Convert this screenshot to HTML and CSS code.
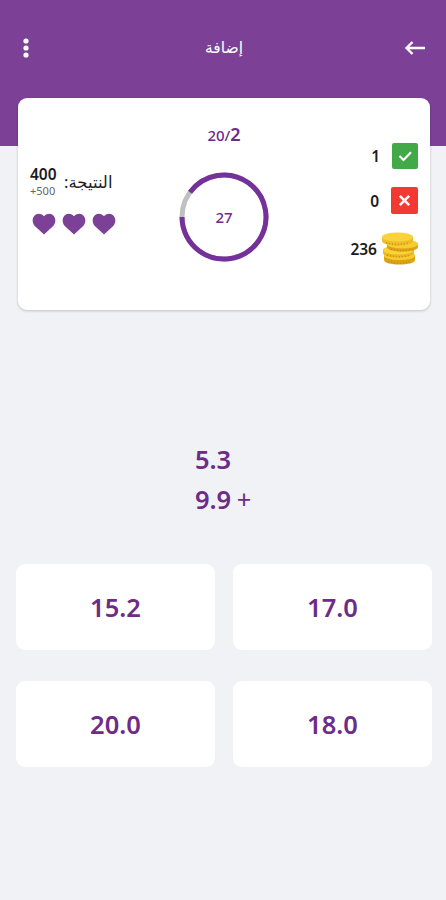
FILE: index.html
```html
<!DOCTYPE html>
<html lang="ar">
<head>
    <meta charset="UTF-8">
    <meta name="viewport" content="width=device-width, initial-scale=1.0">
    <title>إضافة</title>
    <link rel="stylesheet" href="styles.css">
</head>
<body>
    <header class="top-bar">
        <svg class="menu-icon" width="8" height="22" viewBox="0 0 8 22" fill="#fff">
            <circle cx="4" cy="4" r="2.6"/>
            <circle cx="4" cy="11" r="2.6"/>
            <circle cx="4" cy="18" r="2.6"/>
        </svg>
        <h1 dir="rtl">إضافة</h1>
        <svg class="back-icon" width="22" height="16" viewBox="0 0 22 16" fill="none" stroke="#fff" stroke-width="2.4">
            <path d="M21 8H2.5M8.5 2l-6 6 6 6"/>
        </svg>
    </header>

    <section class="status-card">
        <div class="score">
            <div class="score-row">
                <div class="score-values">
                    <span class="score-total">400</span>
                    <span class="score-bonus">+500</span>
                </div>
                <span class="score-label" dir="rtl">النتيجة:</span>
            </div>
            <div class="hearts">
                <svg width="24" height="22" viewBox="0 0 24 22"><path d="M12 21.5L2.8 13C-3.2 6 4.5-3.8 12 3.2C19.5-3.8 27.2 6 21.2 13Z"/></svg>
                <svg width="24" height="22" viewBox="0 0 24 22"><path d="M12 21.5L2.8 13C-3.2 6 4.5-3.8 12 3.2C19.5-3.8 27.2 6 21.2 13Z"/></svg>
                <svg width="24" height="22" viewBox="0 0 24 22"><path d="M12 21.5L2.8 13C-3.2 6 4.5-3.8 12 3.2C19.5-3.8 27.2 6 21.2 13Z"/></svg>
            </div>
        </div>

        <div class="progress">
            <div class="question-count">20/<b>2</b></div>
            <svg class="timer" width="90" height="90" viewBox="0 0 90 90">
                <circle class="timer-track" cx="45" cy="45" r="42"/>
                <circle class="timer-value" cx="45" cy="45" r="42" pathLength="100" stroke-dasharray="90 10" transform="rotate(216 45 45)"/>
                <text x="45" y="51">27</text>
            </svg>
        </div>

        <div class="counters">
            <div class="counter">
                <span>1</span>
                <svg width="26" height="26" viewBox="0 0 26 26">
                    <rect width="26" height="26" rx="2" fill="#43a948"/>
                    <path d="M7.5 13l4 4L19 9.3" fill="none" stroke="#fff" stroke-width="2.2"/>
                </svg>
            </div>
            <div class="counter">
                <span>0</span>
                <svg width="27" height="27" viewBox="0 0 27 27">
                    <rect width="27" height="27" rx="2" fill="#f03a32"/>
                    <path d="M8.8 8.8l9.4 9.4M18.2 8.8l-9.4 9.4" stroke="#fff" stroke-width="2.5"/>
                </svg>
            </div>
            <div class="counter coins">
                <span>236</span>
                <svg width="36" height="33" viewBox="0 0 36 33">
                    <g fill="#dda313">
                        <path d="M2 23v5c0 6 31 6 31 0v-5z"/>
                        <ellipse cx="17.5" cy="23.5" rx="15.5" ry="4.5" fill="#f8cd30"/>
                        <path d="M1 17v4c0 6 31 6 31 0v-4z" fill="#ebb722"/>
                        <ellipse cx="16.5" cy="18" rx="15.5" ry="4.5" fill="#f9d339"/>
                        <path d="M5 11v4c0 6 31 6 31 0v-4z"/>
                        <ellipse cx="20.5" cy="12" rx="15.5" ry="4.5" fill="#f8cd30"/>
                        <path d="M0 5v4c0 6 31 6 31 0V5z" fill="#efbe26"/>
                        <ellipse cx="15.5" cy="5" rx="15.5" ry="4.5" fill="#f9d339"/>
                    </g>
                    <path d="M4 10.5q11.5 4 23 0M9 17q11.5 3.5 23 0M5 23q11.5 3.5 23 0M6 29.5q11.5 3.5 23 0" fill="none" stroke="#c58d18" stroke-width="1.5" stroke-dasharray="1 2"/>
                </svg>
            </div>
        </div>
    </section>

    <div class="question">
        <div>5.3</div>
        <div>9.9 <span class="operator">+</span></div>
    </div>

    <div class="answers">
        <button>15.2</button>
        <button>17.0</button>
        <button>20.0</button>
        <button>18.0</button>
    </div>
</body>
</html>
```
FILE: styles.css
```css
* {
    box-sizing: border-box;
}
body {
    margin: 0;
    height: 900px;
    overflow: hidden;
    background-color: #f1f2f6;
    font-family: "Noto Sans", "DejaVu Sans", sans-serif;
    color: #1c1c1e;
}
.top-bar {
    display: flex;
    justify-content: space-between;
    align-items: flex-start;
    height: 146px;
    padding: 37px 20px 0 22px;
    background-color: #7c4196;
}
.top-bar h1 {
    margin: 0 0 0 14px;
    font-size: 15.5px;
    line-height: 20px;
    font-weight: 500;
    color: #fff;
}
.back-icon {
    margin-top: 3px;
}
.status-card {
    display: grid;
    grid-template-columns: 1fr 90px 1fr;
    height: 212px;
    margin: -48px 16px 0 18px;
    padding: 0 12px;
    background-color: #fff;
    border-radius: 9px;
    box-shadow: 0 1px 3px rgba(0, 0, 0, 0.2);
}
.score {
    padding-top: 67px;
}
.score-row {
    display: flex;
    gap: 7px;
}
.score-values {
    display: flex;
    flex-direction: column;
    width: 27px;
}
.score-total {
    font-size: 15.5px;
    line-height: 19px;
    font-weight: 600;
}
.score-bonus {
    font-size: 11px;
    line-height: 13px;
    color: #666;
}
.score-label {
    font-size: 16.5px;
    line-height: 33px;
    white-space: nowrap;
}
.hearts {
    display: flex;
    gap: 6px;
    margin: 15px 0 0 2px;
}
.hearts svg {
    fill: #7c4196;
}
.progress {
    display: flex;
    flex-direction: column;
    align-items: center;
}
.question-count {
    margin-top: 25px;
    font-size: 15px;
    line-height: 22px;
    font-weight: 500;
    color: #6c2c88;
}
.question-count b {
    font-size: 18px;
    font-weight: 600;
}
.timer {
    margin: 26px 1px 0 0;
}
.timer circle {
    fill: none;
    stroke-width: 5;
}
.timer-track {
    stroke: #c0c0c0;
}
.timer .timer-value {
    stroke: #75319a;
}
.timer text {
    font-size: 15px;
    font-weight: 500;
    text-anchor: middle;
    fill: #6c2c88;
}
.counters {
    padding-top: 44px;
}
.counter {
    display: flex;
    justify-content: flex-end;
    align-items: center;
    gap: 12px;
    height: 27px;
    margin-bottom: 18px;
    font-size: 15.5px;
    font-weight: 600;
}
.coins {
    gap: 5px;
    height: 33px;
}
.question {
    width: 58px;
    margin: 129px auto 0 195px;
    font-size: 25.5px;
    line-height: 40px;
    font-weight: 600;
    color: #6c2c88;
    white-space: nowrap;
}
.operator {
    margin-left: -1px;
    font-weight: 400;
}
.answers {
    display: grid;
    grid-template-columns: 1fr 1fr;
    gap: 31px 18px;
    margin: 45px 14px 0 16px;
}
.answers button {
    height: 86px;
    padding: 0;
    border: none;
    border-radius: 9px;
    background-color: #fff;
    font-family: inherit;
    font-size: 25.5px;
    font-weight: 600;
    color: #6c2c88;
}
```
